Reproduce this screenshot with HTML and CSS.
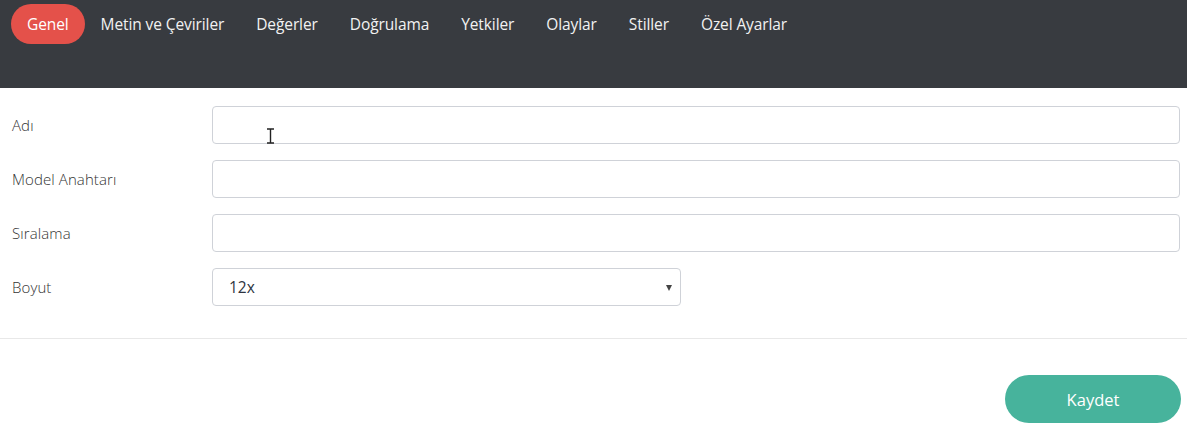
FILE: index.html
```html
<!DOCTYPE html>
<html lang="tr">
<head>
<meta charset="utf-8">
<link rel="stylesheet" href="styles.css">
</head>
<body>
<header class="topbar">
  <nav class="tabs">
    <a class="tab active">Genel</a>
    <a class="tab">Metin ve Çeviriler</a>
    <a class="tab">Değerler</a>
    <a class="tab">Doğrulama</a>
    <a class="tab">Yetkiler</a>
    <a class="tab">Olaylar</a>
    <a class="tab">Stiller</a>
    <a class="tab">Özel Ayarlar</a>
  </nav>
</header>
<main class="form">
  <div class="row">
    <label class="label">Adı</label>
    <div class="field"><input class="input" type="text"><svg class="cursor" width="9" height="16" viewBox="0 0 9 16"><path d="M1 1h7M1 15h7M4.5 1v14" stroke="#222" stroke-width="1.4" fill="none"/></svg></div>
  </div>
  <div class="row">
    <label class="label">Model Anahtarı</label>
    <div class="field"><input class="input" type="text"></div>
  </div>
  <div class="row">
    <label class="label">Sıralama</label>
    <div class="field"><input class="input" type="text"></div>
  </div>
  <div class="row">
    <label class="label">Boyut</label>
    <div class="field"><div class="select"><span>12x</span><span class="caret"></span></div></div>
  </div>
</main>
<div class="divider"></div>
<footer class="actions">
  <button class="btn-save">Kaydet</button>
</footer>
</body>
</html>
```
FILE: styles.css
```css
* { box-sizing: border-box; }
body {
  margin: 0;
  font-family: "Open Sans", "Noto Sans", sans-serif;
  background: #fff;
  color: #333;
}
.topbar {
  background: #383b40;
  height: 88px;
  padding: 4px 0 0 11px;
}
.tabs {
  display: flex;
  align-items: center;
}
.tab {
  height: 40px;
  display: flex;
  align-items: center;
  padding: 0 16px;
  border-radius: 20px;
  color: #f2f2f2;
  font-size: 15.5px;
  letter-spacing: -0.1px;
}
.tab.active {
  background: #e4514a;
  color: #fff;
}
.form {
  padding: 18px 7px 0 12px;
  display: flex;
  flex-direction: column;
  gap: 16px;
}
.row {
  display: flex;
  align-items: center;
  height: 38px;
}
.label {
  width: 200px;
  font-size: 15px;
  font-weight: 300;
  color: #333;
  letter-spacing: 0.1px;
}
.field {
  flex: 1;
  position: relative;
  height: 38px;
}
.input {
  width: 100%;
  height: 38px;
  border: 1px solid #cfd2d8;
  border-radius: 4px;
  background: #fff;
  outline: none;
}
.cursor {
  position: absolute;
  left: 54px;
  top: 22px;
}
.select {
  width: 469px;
  height: 38px;
  border: 1px solid #cfd2d8;
  border-radius: 4px;
  display: flex;
  align-items: center;
  justify-content: space-between;
  padding: 0 8px 0 16px;
  font-size: 15.5px;
  color: #2e3440;
}
.caret {
  width: 0;
  height: 0;
  border-left: 3.5px solid transparent;
  border-right: 3.5px solid transparent;
  border-top: 6px solid #444;
  margin-top: 1px;
}
.divider {
  margin-top: 32px;
  height: 1px;
  background: #e8e8e8;
}
.actions {
  display: flex;
  justify-content: flex-end;
  padding: 36px 6px 0 0;
}
.btn-save {
  width: 176px;
  height: 48px;
  border: none;
  border-radius: 24px;
  background: #47b39c;
  color: #fff;
  font-family: "Open Sans", "Noto Sans", sans-serif;
  font-size: 16.5px;
}
```
